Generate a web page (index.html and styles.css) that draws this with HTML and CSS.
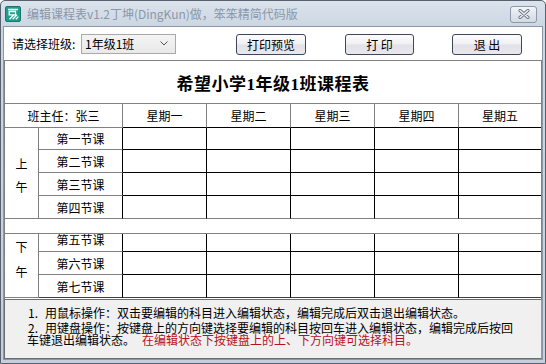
FILE: index.html
```html
<!DOCTYPE html>
<html lang="zh-CN">
<head>
    <meta charset="UTF-8">
    <title>编辑课程表</title>
    <link rel="stylesheet" href="styles.css">
</head>
<body>
<div class="window">
    <div class="titlebar">
        <svg class="app-icon" viewBox="0 0 16 16">
            <rect x="0.5" y="0.5" width="15" height="15" rx="1.5" fill="#1f9c8c" stroke="#16786c"/>
            <path d="M3 3.5h10M4.2 5.5v3.3h6.3V5.5zM4.5 13.2l4.2-4.2M7.6 13.2l4.4-4.4M10.8 13.2l2.6-2.6" stroke="#fff" stroke-width="1.3" fill="none"/>
        </svg>
        <span class="title">编辑课程表v1.2丁坤(DingKun)做，笨笨精简代码版</span>
        <div class="close-btn">
            <svg width="14" height="10" viewBox="0 0 14 10">
                <path d="M3 1.5l8 7M11 1.5l-8 7" stroke="#6f7886" stroke-width="3.2" stroke-linecap="round"/>
                <path d="M3 1.5l8 7M11 1.5l-8 7" stroke="#eef1f4" stroke-width="1.4" stroke-linecap="round"/>
            </svg>
        </div>
    </div>
    <div class="client">
        <div class="toolbar">
            <span class="class-label">请选择班级:</span>
            <div class="combo">
                <span>1年级1班</span>
                <svg class="combo-arrow" width="8" height="5" viewBox="0 0 8 5"><path d="M0.5 0.5l3.5 3.5 3.5-3.5" stroke="#555" fill="none"/></svg>
            </div>
            <button class="btn btn-preview">打印预览</button>
            <button class="btn btn-print">打 印</button>
            <button class="btn btn-exit">退 出</button>
        </div>

        <div class="sheet">
            <div class="sheet-title">希望小学1年级1班课程表</div>
            <div class="grid">
                <div class="hd hd-first">班主任：张三</div>
                <div class="hd">星期一</div>
                <div class="hd">星期二</div>
                <div class="hd">星期三</div>
                <div class="hd">星期四</div>
                <div class="hd end">星期五</div>

                <div class="ampm am"><span>上</span><span>午</span></div>
                <div class="lesson">第一节课</div>
                <div class="cell"></div><div class="cell"></div><div class="cell"></div><div class="cell"></div><div class="cell end"></div>
                <div class="lesson">第二节课</div>
                <div class="cell"></div><div class="cell"></div><div class="cell"></div><div class="cell"></div><div class="cell end"></div>
                <div class="lesson">第三节课</div>
                <div class="cell"></div><div class="cell"></div><div class="cell"></div><div class="cell"></div><div class="cell end"></div>
                <div class="lesson">第四节课</div>
                <div class="cell grey"></div><div class="cell grey"></div><div class="cell grey"></div><div class="cell grey"></div><div class="cell grey end"></div>

                <div class="gap"></div>

                <div class="ampm pm"><span>下</span><span>午</span></div>
                <div class="lesson clipped"><span>第五节课</span></div>
                <div class="cell"></div><div class="cell"></div><div class="cell"></div><div class="cell"></div><div class="cell end"></div>
                <div class="lesson">第六节课</div>
                <div class="cell"></div><div class="cell"></div><div class="cell"></div><div class="cell"></div><div class="cell end"></div>
                <div class="lesson last">第七节课</div>
                <div class="cell last"></div><div class="cell last"></div><div class="cell last"></div><div class="cell last"></div><div class="cell last end"></div>
            </div>
        </div>

        <div class="notes">
            <p class="note-1"><span class="num">1.</span>用鼠标操作：双击要编辑的科目进入编辑状态，编辑完成后双击退出编辑状态。</p>
            <p class="note-2"><span class="num">2.</span>用键盘操作：按键盘上的方向键选择要编辑的科目按回车进入编辑状态，编辑完成后按回<br>车键退出编辑状态。<span class="hint">在编辑状态下按键盘上的上、下方向键可选择科目。</span></p>
        </div>
    </div>
</div>
</body>
</html>
```

FILE: styles.css
```css
body {
    margin: 0;
    font-family: "Noto Sans CJK SC", sans-serif;
    font-size: 12px;
    color: #000;
}
.window {
    width: 546px;
    height: 364px;
    box-sizing: border-box;
    border: 1px solid #58626f;
    border-radius: 5px 5px 0 0;
    background: linear-gradient(#dbe3ec, #ccd6e2 26px, #c6d0dc);
    display: flex;
    flex-direction: column;
}
.titlebar {
    flex: none;
    height: 26px;
    display: flex;
    align-items: center;
    padding: 0 8px 0 4px;
}
.app-icon {
    width: 16px;
    height: 16px;
    margin-right: 6px;
}
.title {
    color: #8a97a9;
    font-size: 12px;
    line-height: 16px;
}
.close-btn {
    margin-left: auto;
    width: 27px;
    height: 17px;
    box-sizing: border-box;
    border: 1px solid #8d98a8;
    border-radius: 3px;
    background: linear-gradient(#f3f5f8, #e1e6ec 50%, #d3dae3);
    display: flex;
    align-items: center;
    justify-content: center;
}
.client {
    margin: 0 3px;
    height: 332px;
    background: #fff;
    display: flex;
    flex-direction: column;
    box-shadow: 0 0 0 1px #8b97a8;
}
.toolbar {
    flex: none;
    height: 33px;
    display: flex;
    align-items: center;
    padding-left: 8px;
}
.class-label {
    width: 69px;
}
.combo {
    width: 95px;
    height: 20px;
    box-sizing: border-box;
    border: 1px solid #a9a9a9;
    background: linear-gradient(#f4f4f4, #e9e9e9);
    display: flex;
    align-items: center;
    padding: 0 7px 0 3px;
}
.combo-arrow {
    margin-left: auto;
}
.btn {
    height: 21px;
    box-sizing: border-box;
    border: 1px solid #3e475a;
    border-radius: 3px;
    background: linear-gradient(#fdfdfe, #f0eff3 48%, #e2e1e8 52%, #e9e8ee);
    font-family: "Noto Sans CJK SC", sans-serif;
    font-size: 12px;
    padding: 0;
    margin-top: 1px;
}
.btn-preview {
    width: 70px;
    margin-left: 60px;
}
.btn-print {
    width: 69px;
    margin-left: 39px;
}
.btn-exit {
    width: 70px;
    margin-left: 38px;
}
.sheet {
    flex: none;
    height: 239px;
    box-sizing: border-box;
    border: 1px solid #808080;
    border-bottom: none;
    padding-bottom: 1px;
}
.sheet-title {
    height: 43px;
    box-sizing: border-box;
    border-bottom: 1px solid #808080;
    display: flex;
    align-items: center;
    justify-content: center;
    font-family: "Liberation Serif", "Noto Sans CJK SC", serif;
    font-weight: bold;
    font-size: 17px;
    letter-spacing: 0.5px;
    padding-top: 1px;
}
.grid {
    display: grid;
    grid-template-columns: 34px 84px 84px 84px 84px 84px 82px;
    grid-template-rows: 24px 22px 23px 23px 23px 15px 18px 23px 23px;
}
.grid > div {
    box-sizing: border-box;
    display: flex;
    align-items: center;
    justify-content: center;
    border-right: 1px solid #000;
    border-bottom: 1px solid #000;
}
.grid > .hd {
    border-right-color: #808080;
}
.grid > .hd-first {
    grid-column: span 2;
    border-bottom-color: #808080;
}
.grid > .ampm {
    flex-direction: column;
    border-right-color: #808080;
    border-bottom-color: #808080;
}
.grid > .am {
    grid-row: span 4;
    line-height: 23px;
    padding-top: 3px;
}
.grid > .pm {
    grid-row: span 3;
    line-height: 25px;
    justify-content: flex-start;
}
.grid > .lesson {
    border-bottom-color: #808080;
}
.grid > .clipped {
    overflow: hidden;
    align-items: flex-end;
}
.clipped span {
    line-height: 23px;
    flex: none;
}
.grid > .grey {
    border-bottom-color: #808080;
}
.grid > .gap {
    grid-column: 1 / -1;
    border-right: none;
    border-bottom-color: #808080;
}
.grid > .last {
    border-bottom-color: #404040;
}
.grid > .end {
    border-right: none;
}
.notes {
    flex: none;
    height: 60px;
    box-sizing: border-box;
    border: 1px solid #6e6e6e;
    border-right-color: #9a9a9a;
    background: #f0f0f0;
    padding: 4px 0 0 22px;
}
.notes p {
    margin: 0;
}
.num {
    display: inline-block;
    width: 18px;
    padding-left: 1px;
    box-sizing: border-box;
}
.note-1 {
    line-height: 18px;
}
.note-2 {
    line-height: 12px;
    margin-top: 3px;
}
.hint {
    color: #b8101e;
    margin-left: 7px;
}
```
